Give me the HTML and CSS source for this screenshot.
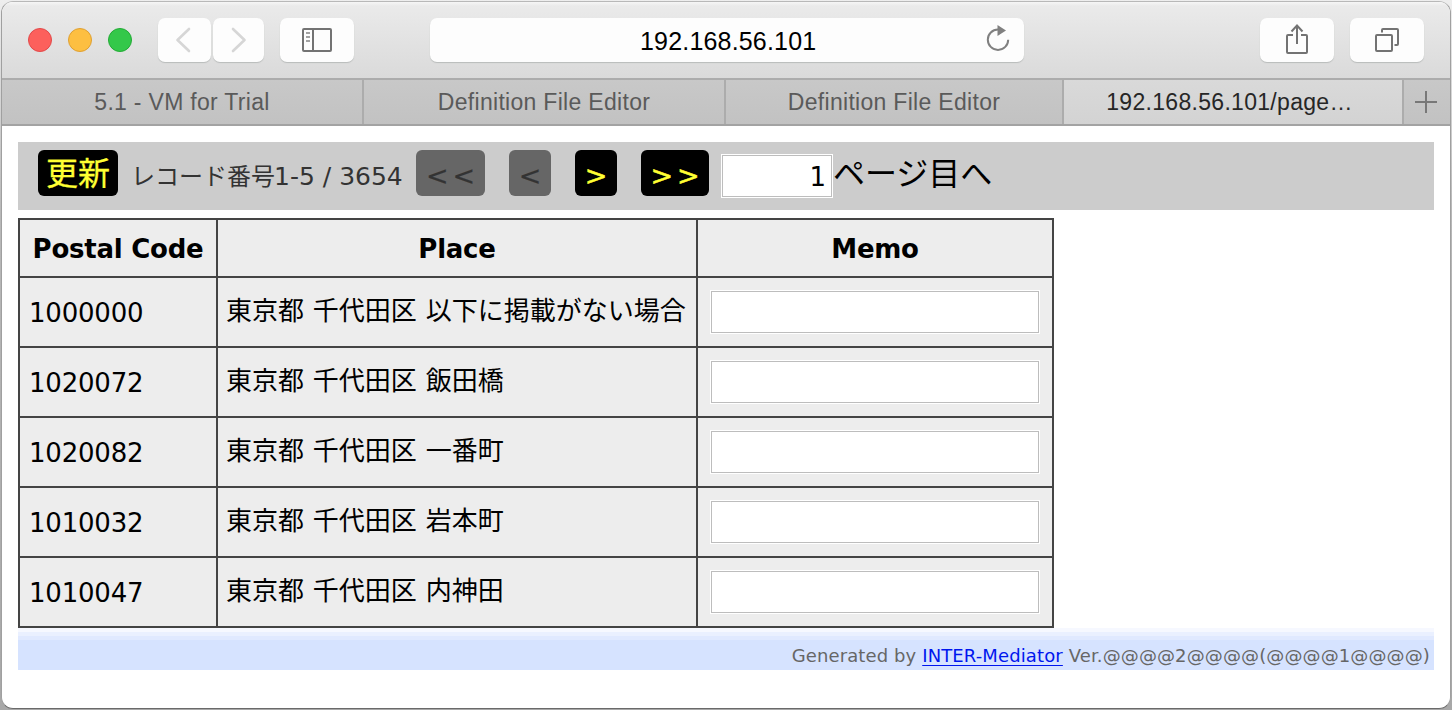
FILE: index.html
```
<!DOCTYPE html>
<html lang="ja">
<head>
<meta charset="utf-8">
<title>192.168.56.101</title>
<link rel="stylesheet" href="styles.css">
</head>
<body>
<div class="window">
  <header class="toolbar">
    <div class="lights"><i class="light red"></i><i class="light yellow"></i><i class="light green"></i></div>
    <div class="history">
      <button class="tool back" aria-label="Back"><svg width="16" height="26" viewBox="0 0 16 26"><path d="M14 2 2.500 13 14 24"/></svg></button>
      <button class="tool forward" aria-label="Forward"><svg width="16" height="26" viewBox="0 0 16 26"><path d="M2 2 13.500 13 2 24"/></svg></button>
    </div>
    <button class="tool wide sidebar" aria-label="Sidebar"><svg width="30" height="24" viewBox="0 0 30 24"><rect x="1" y="1" width="28" height="22" rx="1"/><path d="M11 1v22"/><path class="faint" d="M4 5h4M4 9h4M4 13h4"/></svg></button>
    <div class="address"><span class="host">192.168.56.101</span>
      <svg class="reload" width="24" height="28" viewBox="0 0 24 28"><path d="M12 5.500A10.200 10.200 0 1 0 22.200 15.700"/><path class="solid" d="M11.500 1v11l8.500-5.500z"/></svg>
    </div>
    <button class="tool wide share" aria-label="Share"><svg width="24" height="32" viewBox="0 0 24 32"><path d="M8 12H3q-1 0-1 1v16q0 1 1 1h18q1 0 1-1V13q0-1-1-1h-5M12 21V3M6.500 8.500 12 2.500l5.500 6"/></svg></button>
    <button class="tool wide overview" aria-label="Tabs"><svg width="26" height="26" viewBox="0 0 26 26"><rect x="2" y="8" width="16" height="16" rx="1"/><path d="M8 5.500V3q0-1 1-1h14q1 0 1 1v14q0 1-1 1h-2.500"/></svg></button>
  </header>
  <nav class="tabs">
    <div class="tab t1"><span>5.1 - VM for Trial</span></div>
    <div class="tab t2"><span>Definition File Editor</span></div>
    <div class="tab t3"><span>Definition File Editor</span></div>
    <div class="tab t4 active"><span>192.168.56.101/page…</span></div>
    <div class="tab add"><svg width="22" height="22" viewBox="0 0 22 22"><path d="M0 11h22M11 0v22"/></svg></div>
  </nav>
  <main class="page">
    <div class="pager">
      <button class="nav update">更新</button>
      <span class="count"><span class="label">レコード番号</span>1-5 / 3654</span>
      <button class="nav first off">&lt;&lt;</button>
      <button class="nav prev off">&lt;</button>
      <button class="nav next">&gt;</button>
      <button class="nav last">&gt;&gt;</button>
      <input class="field jump" value="1">
      <span class="goto">ページ目へ</span>
    </div>
    <table class="records">
      <colgroup><col class="c1"><col class="c2"><col class="c3"></colgroup>
      <tr><th>Postal Code</th><th>Place</th><th>Memo</th></tr>
      <tr><td class="code">1000000</td><td class="place">東京都 千代田区 以下に掲載がない場合</td><td class="memo"><input class="field"></td></tr>
      <tr><td class="code">1020072</td><td class="place">東京都 千代田区 飯田橋</td><td class="memo"><input class="field"></td></tr>
      <tr><td class="code">1020082</td><td class="place">東京都 千代田区 一番町</td><td class="memo"><input class="field"></td></tr>
      <tr><td class="code">1010032</td><td class="place">東京都 千代田区 岩本町</td><td class="memo"><input class="field"></td></tr>
      <tr><td class="code">1010047</td><td class="place">東京都 千代田区 内神田</td><td class="memo"><input class="field"></td></tr>
    </table>
    <footer class="credit"><span>Generated by <a href="#">INTER-Mediator</a> Ver.@@@@2@@@@(@@@@1@@@@)</span></footer>
  </main>
</div>
</body>
</html>
```
FILE: styles.css
```
* { box-sizing: border-box; }
body {
  margin: 0;
  height: 710px;
  padding: 1px;
  overflow: hidden;
  background: linear-gradient(#eeeeee, #b8b8b8 30%, #a8a8a8);
  font-family: "DejaVu Sans", "Noto Sans CJK JP", sans-serif;
  color: #000;
}
.window {
  width: 1450px;
  height: 708px;
  border: 1px solid #a0a0a0;
  border-top-color: #b8b8b8;
  border-bottom-color: #6a6a6a;
  border-radius: 12px;
  overflow: hidden;
  background: #fff;
}
button { border: 0; padding: 0; margin: 0; font: inherit; }
svg { display: block; fill: none; stroke: #737373; stroke-width: 2; }

.toolbar {
  display: flex;
  height: 76px;
  padding: 16px 26px 0;
  background: linear-gradient(#f6f6f6, #eaeaea 4px, #dadada);
}
.lights { display: flex; gap: 16px; width: 130px; padding-top: 10px; }
.light { width: 24px; height: 24px; border-radius: 50%; border: 1px solid; }
.red { background: #fc605c; border-color: #e2494a; }
.yellow { background: #fdbf41; border-color: #dfa033; }
.green { background: #34c84a; border-color: #23ab35; }
.history { display: flex; gap: 2px; width: 122px; }
.tool {
  display: flex;
  align-items: center;
  justify-content: center;
  height: 44px;
  border-radius: 7px;
  background: #fdfdfd;
  box-shadow: 0 1px 1px #b9bcbb;
}
.back { width: 53px; }
.forward { width: 51px; }
.history svg { stroke: #d6d6d6; stroke-width: 2.6; stroke-linecap: round; stroke-linejoin: round; }
.back svg { margin-right: 4px; }
.wide { width: 74px; }
.sidebar .faint { stroke: #a2a2a2; }
.address {
  display: flex;
  align-items: center;
  width: 594px;
  height: 44px;
  margin: 0 236px 0 76px;
  padding-left: 210px;
  border-radius: 7px;
  background: #fdfdfd;
  box-shadow: 0 1px 1px #b9bcbb;
  font: 25px/28px "Liberation Sans", sans-serif;
}
.host { width: 346px; padding-top: 2px; letter-spacing: .18px; }
.reload { stroke: #808080; margin-top: -4px; }
.reload .solid { fill: #808080; stroke: none; }
.overview { margin-left: 16px; }
.share svg { margin-top: -3px; }

.tabs { display: flex; height: 48px; border-top: 2px solid #acacac; border-bottom: 2px solid #a3a3a3; }
.tab {
  display: flex;
  justify-content: center;
  height: 44px;
  border-right: 2px solid #acacac;
  background: linear-gradient(#c8c8c8, #c2c2c2);
  font: 23px/44px "Liberation Sans", sans-serif;
  letter-spacing: .3px;
  color: #5a5a5a;
}
.t1 { width: 362px; }
.t2 { width: 362px; }
.t3 { width: 338px; }
.t4 { width: 340px; padding-right: 7px; }
.active { background: linear-gradient(#d9d9d9, #d3d3d3); color: #262626; }
.add { width: 46px; border: 0; align-items: center; justify-content: flex-start; padding-left: 11px; }
.add svg { stroke: #787878; }

.page { padding: 16px; }
.pager { display: flex; height: 68px; padding: 8px 20px; background: #ccc; }
.nav {
  height: 46px;
  border-radius: 6px;
  background: #000;
  color: #ff3;
  font-size: 27px;
  line-height: 51px;
  -webkit-text-stroke: .5px;
}
.update { width: 80px; font: 32px/42px "Noto Sans CJK JP", sans-serif; padding-bottom: 4px; -webkit-text-stroke: .3px; }
.off { background: #666; color: #333; -webkit-text-stroke: .2px; }
.count { display: flex; width: 298px; padding-left: 13px; color: #333; font-size: 25px; line-height: 54px; white-space: nowrap; }
.label { width: 143px; font-size: 24px; line-height: 55px; }
.first { width: 69px; letter-spacing: 4px; padding-left: 4px; }
.prev { width: 42px; margin-left: 24px; }
.next { width: 42px; margin-left: 24px; }
.last { width: 68px; margin-left: 24px; letter-spacing: 4px; padding-left: 4px; }
.field {
  display: block;
  width: 330px;
  height: 44px;
  margin: 0;
  border: 1px solid #bdbdbd;
  outline: 0;
  padding: 0;
  background: #fff;
  font: 26px "DejaVu Sans", sans-serif;
  box-shadow: 0 0 0 1px #fff;
}
.jump { width: 110px; height: 42px; margin: 5px 1px 0 13px; padding: 1px 5px 0 0; text-align: right; }
.goto { font-size: 32px; line-height: 48px; white-space: nowrap; }

.records {
  width: 1036px;
  margin-top: 8px;
  border-spacing: 2px;
  table-layout: fixed;
  background: #444;
}
.c1 { width: 196px; }
.c2 { width: 478px; }
.c3 { width: 354px; }
.records th, .records td { padding: 0; height: 68px; background: #ededed; white-space: nowrap; }
.records th { height: 56px; padding-top: 2px; font-size: 26px; line-height: 54px; letter-spacing: -.25px; }
.records .code { padding: 2px 0 0 9px; font-size: 26px; line-height: 66px; letter-spacing: -.2px; }
.records .place { padding: 0 0 6px 8px; font: 26px/62px "Noto Sans CJK JP", sans-serif; word-spacing: 3px; }
.records .memo { padding-left: 13px; }
.memo .field { width: 328px; height: 42px; }
.credit {
  height: 42px;
  padding-right: 4px;
  background: linear-gradient(#f6f8ff 4px, #eaf0ff 4px 8px, #e0e9ff 8px 12px, #d6e3ff 12px);
  text-align: right;
  font-size: 18px;
  line-height: 55px;
  letter-spacing: .12px;
  color: #666;
}
.credit a { color: #0016ee; text-underline-offset: 3px; }
```
